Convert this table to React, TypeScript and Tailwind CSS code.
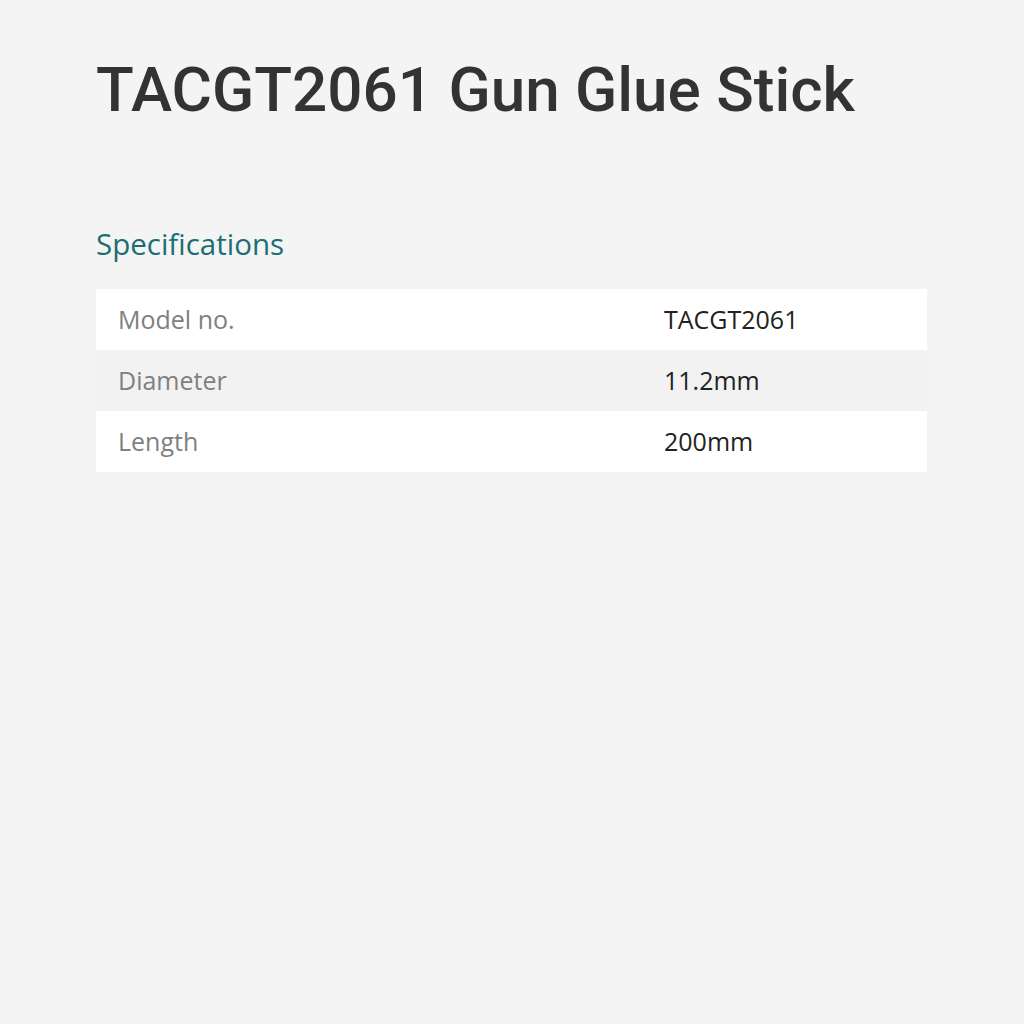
const specs = [
  { label: "Model no.", value: "TACGT2061" },
  { label: "Diameter", value: "11.2mm" },
  { label: "Length", value: "200mm" },
];

export default function App() {
  return (
    <div className="min-h-screen w-full bg-[#f4f4f4] px-[96px] pt-[50px] font-['Open_Sans',sans-serif]">
      <h1 className="whitespace-nowrap font-['Roboto',sans-serif] text-[62px] font-medium leading-[80px] text-[#333333]">
        TACGT2061 Gun Glue Stick
      </h1>

      <h2 className="mt-[94px] text-[29.5px] leading-[40px] font-medium text-[#1b6f73]">
        Specifications
      </h2>

      <div className="mt-[25px] w-[831px]">
        {specs.map((row, i) => (
          <div
            key={row.label}
            className={
              "grid h-[61px] grid-cols-[546px_1fr] items-center px-[22px] text-[25px] " +
              (i % 2 === 0 ? "bg-white" : "bg-[#f2f2f2]")
            }
          >
            <span className="text-[#808080]">{row.label}</span>
            <span className="text-[#222222]">{row.value}</span>
          </div>
        ))}
      </div>
    </div>
  );
}
